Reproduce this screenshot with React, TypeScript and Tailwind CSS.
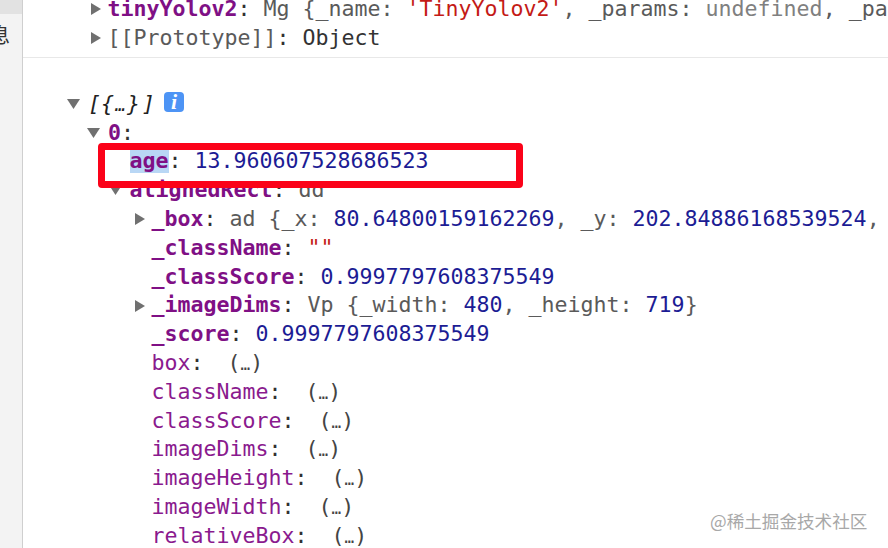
import type { ReactNode } from 'react'

const KEY = 'font-bold text-[#7f1085]'
const LAZY = 'text-[#8a1a8e]'
const NUM = 'text-[#1c1c94]'
const GREY = 'text-[#5a5a5a]'

function Arrow({ open }: { open?: boolean }) {
  if (open) {
    return (
      <svg className="-ml-[21px] mr-[8px] shrink-0" width="13" height="10" viewBox="0 0 13 10">
        <path d="M0 0h13L6.5 10z" fill="#707070" />
      </svg>
    )
  }
  return (
    <svg className="-ml-[17px] mr-[7px] shrink-0" width="10" height="12" viewBox="0 0 10 12">
      <path d="M0 0v12L10 6z" fill="#707070" />
    </svg>
  )
}

function Row({ indent, arrow, children }: { indent: string; arrow?: 'open' | 'closed'; children: ReactNode }) {
  return (
    <div className={`flex h-[28.8px] items-center whitespace-pre ${indent}`}>
      {arrow && <Arrow open={arrow === 'open'} />}
      <span>{children}</span>
    </div>
  )
}

function Key({ name }: { name: string }) {
  return (
    <>
      <span className={KEY}>{name}</span>
      <span className="text-[#303030]">: </span>
    </>
  )
}

function Getter({ name }: { name: string }) {
  return (
    <>
      <span className={LAZY}>{name}</span>
      <span className="mr-[24px] text-[#303030]">:</span>
      <span className="text-[#444]">
        (<span className="text-[16px]">…</span>)
      </span>
    </>
  )
}

const getters = ['box', 'className', 'classScore', 'imageDims', 'imageHeight', 'imageWidth', 'relativeBox']

export default function App() {
  return (
    <div className="relative flex h-[548px] w-[888px] overflow-hidden bg-white font-['DejaVu_Sans_Mono','Liberation_Mono','Noto_Sans_CJK_SC',monospace] text-[21.6px] text-[#303030]">
      <aside className="flex w-[23px] shrink-0 flex-col overflow-hidden border-r border-[#cfcfcf] bg-[#f3f3f3]">
        <div className="h-[14px] bg-[#e2e2e2]" />
        <div className="-ml-[10px] mt-[11px] font-['Noto_Sans_CJK_SC',sans-serif] text-[20px] leading-[20px] text-[#333]">息</div>
      </aside>

      <main className="min-w-0 flex-1 overflow-hidden">
        <section className="-mt-[5px] border-b border-[#e8e8e8] pb-[4px]">
          <Row indent="pl-[84.5px]" arrow="closed">
            <Key name="tinyYolov2" />
            <span className={GREY}>Mg {'{'}_name: </span>
            <span className="text-[#c41a16]">'TinyYolov2'</span>
            <span className={GREY}>, _params: </span>
            <span className="text-[#808080]">undefined</span>
            <span className={GREY}>, _pa</span>
          </Row>
          <Row indent="pl-[84.5px]" arrow="closed">
            <span className={GREY}>[[Prototype]]</span>
            <span>: </span>
            <span className="text-[#333]">Object</span>
          </Row>
        </section>

        <section className="pt-[32px]">
          <Row indent="pl-[65px]" arrow="open">
            <span className="italic text-[#222]">
              [{'{'}
              <span className="inline-block w-[13px] text-center text-[17px]">…</span>
              {'}'}
              <span className="ml-[2px]">]</span>
            </span>
            <span className="ml-[9px] inline-flex h-[20px] w-[20px] -translate-y-[3px] items-center justify-center rounded-[4px] bg-[#4d94f5] align-middle font-['Liberation_Serif',serif] text-[22px] leading-[20px] font-bold italic text-white">
              i
            </span>
          </Row>
          <Row indent="pl-[85px]" arrow="open">
            <span className={KEY}>0</span>
            <span>:</span>
          </Row>
          <Row indent="pl-[106.5px]">
            <span className={`${KEY} bg-[#b9d7f5]`}>age</span>
            <span>: </span>
            <span className={NUM}>13.960607528686523</span>
          </Row>
          <Row indent="pl-[106.5px]" arrow="open">
            <Key name="alignedRect" />
            <span className={GREY}>dd</span>
          </Row>
          <Row indent="pl-[128.5px]" arrow="closed">
            <Key name="_box" />
            <span className={GREY}>ad {'{'}_x: </span>
            <span className={NUM}>80.64800159162269</span>
            <span className={GREY}>, _y: </span>
            <span className={NUM}>202.84886168539524</span>
            <span className={GREY}>,</span>
          </Row>
          <Row indent="pl-[128.5px]">
            <Key name="_className" />
            <span className="text-[#c41a16]">""</span>
          </Row>
          <Row indent="pl-[128.5px]">
            <Key name="_classScore" />
            <span className={NUM}>0.9997797608375549</span>
          </Row>
          <Row indent="pl-[128.5px]" arrow="closed">
            <Key name="_imageDims" />
            <span className={GREY}>Vp {'{'}_width: </span>
            <span className={NUM}>480</span>
            <span className={GREY}>, _height: </span>
            <span className={NUM}>719</span>
            <span className={GREY}>{'}'}</span>
          </Row>
          <Row indent="pl-[128.5px]">
            <Key name="_score" />
            <span className={NUM}>0.9997797608375549</span>
          </Row>
          {getters.map((name) => (
            <Row key={name} indent="pl-[128.5px]">
              <Getter name={name} />
            </Row>
          ))}
        </section>
      </main>

      {/* annotation drawn over the console */}
      <div className="absolute left-[98px] top-[143px] h-[45px] w-[425px] rounded-[4px] border-[7px] border-[#fb0219]" />

      <div className="absolute left-[710px] top-[509px] font-['Noto_Sans_CJK_SC',sans-serif] text-[17.6px] leading-[24px] text-[#a8a8a8]">
        @稀土掘金技术社区
      </div>
    </div>
  )
}
